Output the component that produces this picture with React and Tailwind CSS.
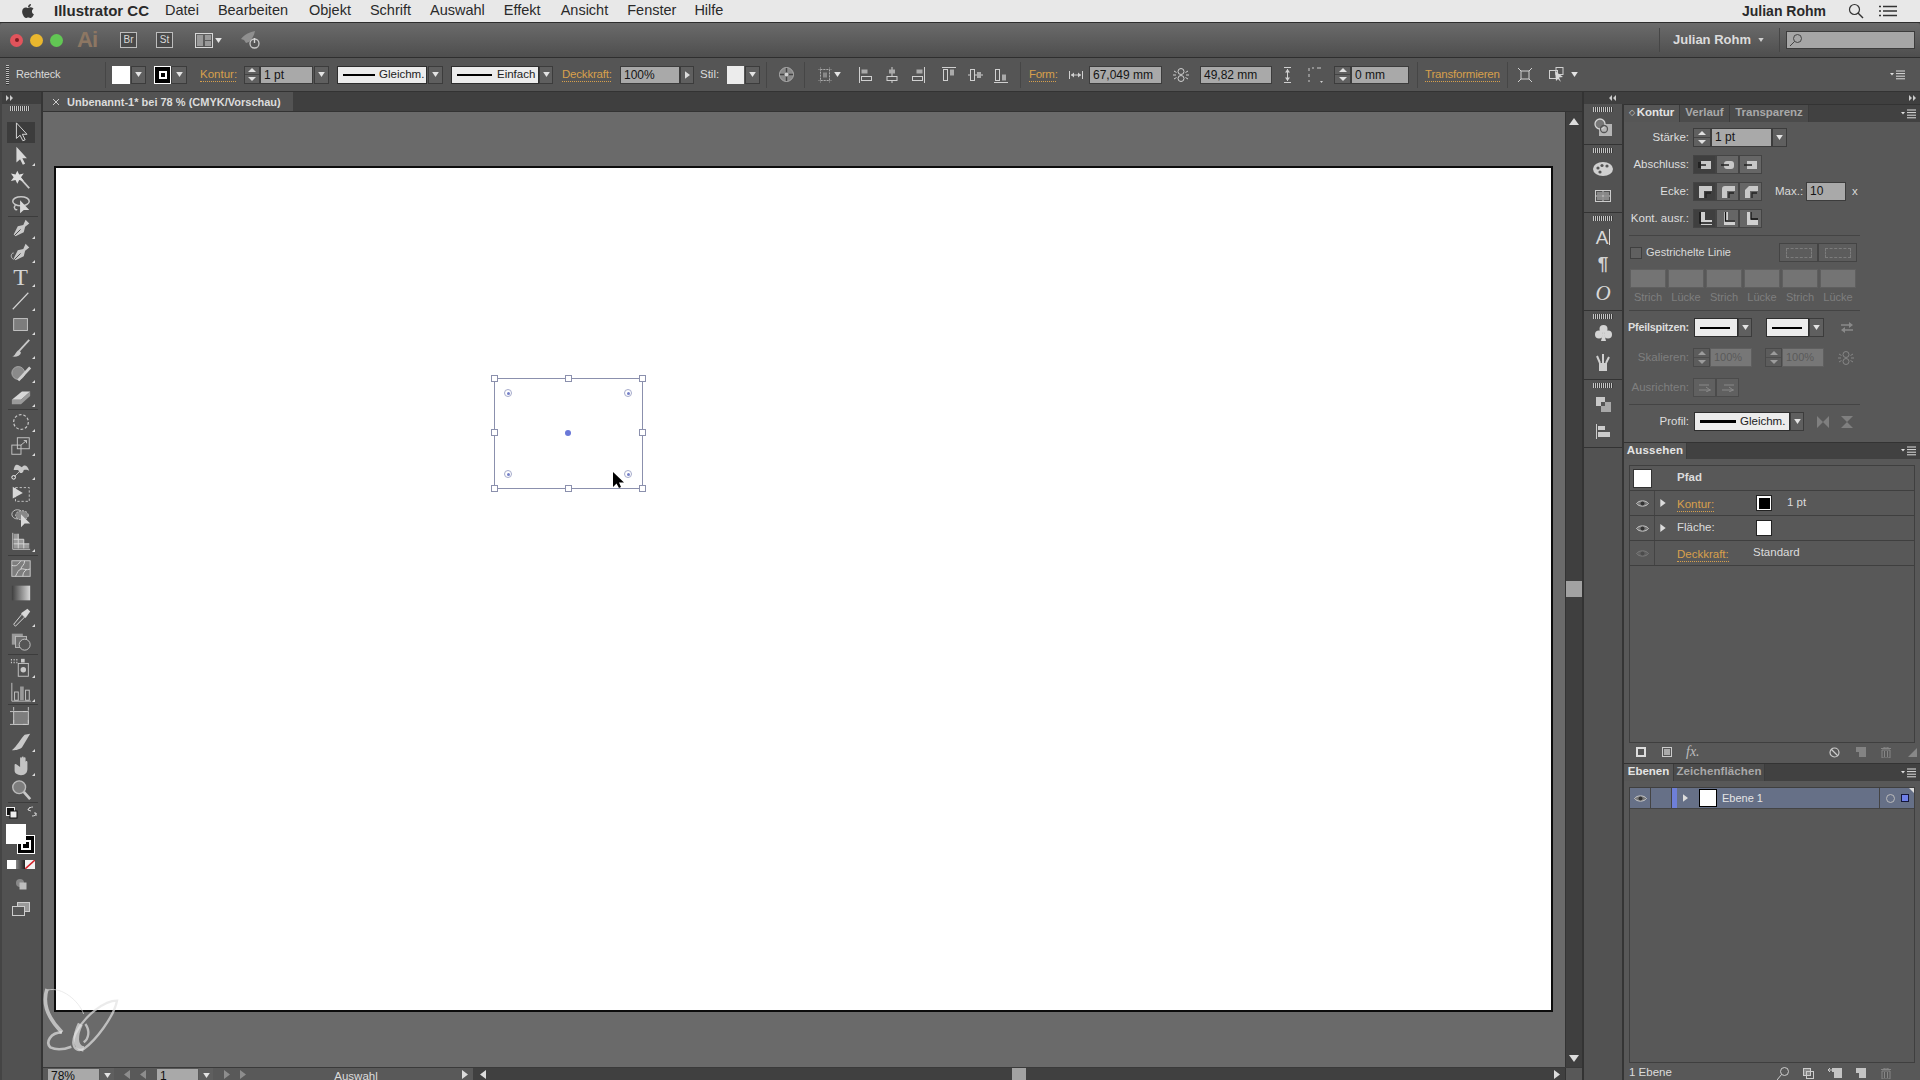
import React from "react";
import { FaApple } from "react-icons/fa";

const Svg = ({ w = 16, h = 16, vb, className = "", children }) => (
  <svg width={w} height={h} viewBox={vb || `0 0 ${w} ${h}`} className={"block shrink-0 " + className} fill="none">{children}</svg>
);
const TriD = ({ c = "#e4e4e4", s = 7 }) => <Svg w={s} h={s - 2} vb="0 0 8 6"><path d="M0 0H8L4 6Z" fill={c} /></Svg>;
const TriR = ({ c = "#dcdcdc", w = 6, h = 9 }) => <Svg w={w} h={h} vb="0 0 6 9"><path d="M0 0L6 4.5L0 9Z" fill={c} /></Svg>;
const TriL = ({ c = "#dcdcdc", w = 6, h = 9 }) => <Svg w={w} h={h} vb="0 0 6 9"><path d="M6 0L0 4.5L6 9Z" fill={c} /></Svg>;
const Btn = ({ className = "" }) => (
  <div className={"h-[18px] shrink-0 bg-[#5f5f5f] border border-[#3c3c3c] flex items-center justify-center " + className}><TriD /></div>
);
const Stepper = ({ className = "", dim }) => (
  <div className={"shrink-0 h-[18px] bg-[#606060] border border-[#3c3c3c] flex flex-col items-center justify-center gap-[2px] " + (dim ? "opacity-50 " : "") + className}>
    <Svg w={8} h={4} vb="0 0 8 4"><path d="M0 4L4 0L8 4Z" fill="#e0e0e0" /></Svg>
    <div className="w-full h-px bg-[#444]" />
    <Svg w={8} h={4} vb="0 0 8 4"><path d="M0 0H8L4 4Z" fill="#e0e0e0" /></Svg>
  </div>
);
const Field = ({ className = "", children }) => (
  <div className={"h-[18px] shrink-0 bg-[#a9a9a9] border border-[#3c3c3c] text-[#151515] text-[12px] leading-[16px] pl-[3px] whitespace-nowrap overflow-hidden " + className}>{children}</div>
);
const Label = ({ className = "", children }) => <div className={"shrink-0 text-[11.5px] text-[#dadada] whitespace-nowrap " + className}>{children}</div>;
const Orange = ({ className = "", children }) => (
  <div className={"shrink-0 text-[11.5px] leading-[13px] text-[#d8a04c] border-b border-dotted border-[#d8a04c] whitespace-nowrap " + className}>{children}</div>
);
const VSep = ({ className = "" }) => <div className={"w-px h-[26px] bg-[#464646] shrink-0 " + className} />;
const LineBox = ({ className = "", line = "w-[32px] h-[2px]", gap = "ml-[4px]", text }) => (
  <div className={"h-[18px] shrink-0 bg-[#ececec] border border-[#2e2e2e] flex items-center pl-[5px] text-[11.5px] text-[#222] whitespace-nowrap " + className}>
    <div className={"bg-black shrink-0 " + line} />
    {text && <span className={gap}>{text}</span>}
  </div>
);
const Menu3 = () => (
  <Svg w={15} h={10} vb="0 0 15 10">
    <path d="M0 3H4L2 5.5Z" fill="#ddd" />
    <path d="M6 1H15M6 3.6H15M6 6.2H15M6 8.8H15" stroke="#ddd" strokeWidth="1" />
  </Svg>
);
const Grip = ({ className = "" }) => <div className={"h-[5px] w-[20px] bg-[repeating-linear-gradient(90deg,#c4c4c4_0,#c4c4c4_1px,#3a3a3a_1px,#3a3a3a_2px)] " + className} />;

const c1 = "#d0d0d0";

function MenuBar() {
  const items = [
    ["Datei", "ml-[16px]"], ["Bearbeiten", "ml-[19px]"], ["Objekt", "ml-[21px]"], ["Schrift", "ml-[19px]"],
    ["Auswahl", "ml-[19px]"], ["Effekt", "ml-[19px]"], ["Ansicht", "ml-[20px]"], ["Fenster", "ml-[19px]"], ["Hilfe", "ml-[18px]"],
  ];
  return (
    <div className="h-[23px] shrink-0 bg-[#e8e8e8] border-b border-[#2e2e2e] flex items-center text-[14.5px] text-[#2a2a2a]">
      <FaApple className="ml-[20px] text-[#3a3a3a] text-[16px] shrink-0" />
      <div className="ml-[18px] font-bold text-[15px] whitespace-nowrap">Illustrator CC</div>
      {items.map(([t, m]) => <div key={t} className={m + " whitespace-nowrap"}>{t}</div>)}
      <div className="ml-auto font-semibold text-[14px] whitespace-nowrap">Julian Rohm</div>
      <Svg w={16} h={16} className="ml-[22px]"><circle cx="6.5" cy="6.5" r="5" stroke="#333" strokeWidth="1.2" /><path d="M10 10L15 15" stroke="#333" strokeWidth="1.4" /></Svg>
      <Svg w={18} h={12} className="ml-[15px] mr-[23px]"><path d="M0 1.5H2M0 6H2M0 10.5H2M4 1.5H18M4 6H18M4 10.5H18" stroke="#333" strokeWidth="1.5" /></Svg>
    </div>
  );
}

function TitleBar() {
  return (
    <div className="h-[35px] shrink-0 bg-gradient-to-b from-[#6b6b6b] to-[#4e4e4e] border-b border-[#2f2f2f] flex items-center rounded-t-[3px]">
      <div className="ml-[10px] w-[13px] h-[13px] rounded-full bg-[#e2545c] flex items-center justify-center shrink-0"><div className="w-[4px] h-[4px] rounded-full bg-[#7d1d22]" /></div>
      <div className="ml-[7px] w-[13px] h-[13px] rounded-full bg-[#eab72e] shrink-0" />
      <div className="ml-[7px] w-[13px] h-[13px] rounded-full bg-[#62c754] shrink-0" />
      <div className="ml-[14px] w-[19px] text-[22px] font-bold text-[#8d7763] leading-none tracking-[-1px]">Ai</div>
      <div className="ml-[24px] w-[17px] h-[16px] border border-[#bdbdbd] bg-[#4a4a4a] text-[10px] leading-[14px] text-center text-[#d8d8d8] shrink-0">Br</div>
      <div className="ml-[19px] w-[17px] h-[16px] border border-[#bdbdbd] bg-[#4a4a4a] text-[10px] leading-[14px] text-center text-[#d8d8d8] shrink-0">St</div>
      <Svg w={18} h={15} className="ml-[22px]"><rect x=".5" y=".5" width="17" height="14" stroke="#d8d8d8" /><rect x="2" y="2" width="6" height="11" fill="#999" /><rect x="10" y="2" width="6" height="5" fill="#999" /><rect x="10" y="8" width="6" height="5" fill="#999" /></Svg>
      <div className="ml-[2px]"><TriD /></div>
      <Svg w={21} h={19} className="ml-[18px]">
        <path d="M1 8C5 3 10 1 15 0C14 5 12 8 9 11L6 12L4 9Z" fill="#8f8f8f" />
        <circle cx="14.5" cy="12.5" r="4.5" stroke="#c8c8c8" strokeWidth="1.3" fill="#555" />
        <path d="M14.5 7V12" stroke="#d8d8d8" strokeWidth="1.4" />
      </Svg>
      <VSep className="ml-auto !h-[24px]" />
      <div className="ml-[13px] w-[75px] font-bold text-[13px] text-[#dcdcdc] whitespace-nowrap">Julian Rohm</div>
      <div className="ml-[10px]"><TriD c="#cfcfcf" s={6} /></div>
      <VSep className="ml-[15px] !h-[24px]" />
      <div className="ml-[6px] mr-[5px] w-[129px] h-[18px] bg-[#a6a6a6] border border-[#3c3c3c] flex items-center pl-[2px] shrink-0">
        <Svg w={14} h={14}><circle cx="8.5" cy="5.5" r="4" stroke="#444" /><path d="M5.5 8.5L1 13" stroke="#444" /></Svg>
      </div>
    </div>
  );
}

function ControlBar() {
  return (
    <div className="h-[34px] shrink-0 bg-[#555555] border-b border-[#333] flex items-center">
      <div className="ml-[6px] w-[3px] h-[20px] bg-[repeating-linear-gradient(180deg,#bbb_0,#bbb_1px,#333_1px,#333_2px)] shrink-0" />
      <Label className="ml-[7px] w-[43px] text-[11px] tracking-[-.2px]">Rechteck</Label>
      <VSep className="ml-[46px]" />
      <div className="ml-[6px] w-[18px] h-[18px] bg-white shrink-0" />
      <Btn className="ml-px w-[15px]" />
      <div className="ml-[8px] w-[17px] h-[18px] bg-black border border-white flex items-center justify-center shrink-0"><div className="w-[8px] h-[8px] border-2 border-white" /></div>
      <Btn className="w-[16px]" />
      <Orange className="ml-[13px] w-[36px]">Kontur:</Orange>
      <Stepper className="ml-[8px] w-[16px]" />
      <Field className="w-[53px]">1 pt</Field>
      <Btn className="ml-px w-[15px]" />
      <LineBox className="ml-[8px] w-[90px]" line="w-[32px] h-[2px]" text="Gleichm." />
      <Btn className="ml-px w-[15px]" />
      <LineBox className="ml-[8px] w-[88px]" line="w-[35px] h-[2px]" gap="ml-[5px]" text="Einfach" />
      <Btn className="w-[14px]" />
      <Orange className="ml-[9px] w-[49px] tracking-[-.2px]">Deckkraft:</Orange>
      <Field className="ml-[9px] w-[60px]">100%</Field>
      <div className="w-[14px] h-[18px] bg-[#5f5f5f] border border-[#3c3c3c] flex items-center justify-center shrink-0"><TriR w={5} h={8} /></div>
      <Label className="ml-[6px] w-[18px]">Stil:</Label>
      <div className="ml-[9px] w-[17px] h-[18px] bg-[#ececec] shrink-0" />
      <Btn className="ml-px w-[15px]" />
      <VSep className="ml-[6px]" />
      <Svg w={15} h={15} className="ml-[12px]">
        <circle cx="7.5" cy="7.5" r="7" fill="#8a8a8a" stroke="#aaa" />
        <path d="M7.5 1V6M14 7.5H9M7.5 14V9M1 7.5H6" stroke="#444" strokeWidth="1.4" />
        <circle cx="7.5" cy="7.5" r="2" fill="#d0d0d0" />
      </Svg>
      <VSep className="ml-[10px]" />
      <Svg w={14} h={16} className="ml-[13px]"><rect x="2.5" y="2.5" width="9" height="11" stroke="#bbb" strokeDasharray="1.5 1.5" /><rect x="5" y="5.5" width="4" height="5" fill="#888" /><path d="M0 2.5H14M0 13.5H14M2.5 0V16M11.5 0V16" stroke="#999" strokeWidth=".5" /></Svg>
      <div className="ml-[2px]"><TriD /></div>
      <Svg w={14} h={16} className="ml-[18px]"><path d="M.5 0V16" stroke={c1} /><rect x="2.5" y="2.5" width="6" height="4" fill="#aaa" /><rect x="2.5" y="9.5" width="10" height="4" stroke={c1} /></Svg>
      <Svg w={12} h={16} className="ml-[13px]"><path d="M6 0V16" stroke={c1} /><rect x="3" y="2.5" width="6" height="4" fill="#aaa" /><rect x="1" y="9.5" width="10" height="4" fill="#555" stroke={c1} /></Svg>
      <Svg w={14} h={16} className="ml-[13px]"><path d="M13.5 0V16" stroke={c1} /><rect x="5.5" y="2.5" width="6" height="4" fill="#aaa" /><rect x="1.5" y="9.5" width="10" height="4" stroke={c1} /></Svg>
      <Svg w={14} h={16} className="ml-[17px]"><path d="M0 .5H14" stroke={c1} /><rect x="1.5" y="2.5" width="4" height="11" stroke={c1} /><rect x="8" y="2.5" width="4" height="6" fill="#aaa" /></Svg>
      <Svg w={15} h={16} className="ml-[12px]"><path d="M0 8H15" stroke={c1} /><rect x="2.5" y="2.5" width="4" height="11" fill="#555" stroke={c1} /><rect x="9" y="5" width="4" height="6" fill="#aaa" /></Svg>
      <Svg w={14} h={16} className="ml-[11px]"><path d="M0 15.5H14" stroke={c1} /><rect x="1.5" y="2.5" width="4" height="11" stroke={c1} /><rect x="8" y="7.5" width="4" height="6" fill="#aaa" /></Svg>
      <VSep className="ml-[12px]" />
      <Orange className="ml-[8px] w-[27px] tracking-[-.3px]">Form:</Orange>
      <Svg w={14} h={8} className="ml-[13px]"><path d="M.5 0V8M13.5 0V8M2 4H12" stroke={c1} /><path d="M2 4L5 1.5V6.5ZM12 4L9 1.5V6.5Z" fill={c1} /></Svg>
      <Field className="ml-[6px] w-[73px]">67,049 mm</Field>
      <Svg w={16} h={16} className="ml-[11px]"><rect x="5" y="1.5" width="6" height="6" rx="3" stroke={c1} /><rect x="5" y="8.5" width="6" height="6" rx="3" stroke={c1} /><path d="M1 4L3.5 5.5M15 4L12.5 5.5M1 12L3.5 10.5M15 12L12.5 10.5M0 8H3M13 8H16" stroke={c1} /></Svg>
      <Field className="ml-[11px] w-[72px]">49,82 mm</Field>
      <Svg w={7} h={16} className="ml-[12px]"><path d="M0 .5H7M0 15.5H7M3.5 2V14" stroke={c1} /><path d="M3.5 2L1 5.5H6ZM3.5 14L1 10.5H6Z" fill={c1} /></Svg>
      <Svg w={16} h={16} className="ml-[17px]"><path d="M1 1V4M1 7V10M1 13V15M4 1H6M9 1H13" stroke="#ccc" /><path d="M12 14H15L13.5 16Z" fill="#ccc" /></Svg>
      <Stepper className="ml-[10px] w-[17px]" />
      <Field className="w-[58px]">0 mm</Field>
      <VSep className="ml-[8px]" />
      <Orange className="ml-[7px] w-[75px] tracking-[-.2px]">Transformieren</Orange>
      <VSep className="ml-[7px]" />
      <Svg w={14} h={14} className="ml-[10px]"><rect x="3" y="3" width="8" height="8" stroke={c1} /><path d="M0 0L3 3M14 0L11 3M0 14L3 11M14 14L11 11" stroke={c1} /></Svg>
      <Svg w={15} h={15} className="ml-[17px]"><rect x=".5" y="3.5" width="8" height="8" stroke={c1} /><rect x="7" y=".5" width="7" height="7" stroke={c1} /><path d="M6 4L14 10L10 10.5L12 15L9 12L7 14Z" fill="#d8d8d8" /></Svg>
      <div className="ml-[7px]"><TriD /></div>
      <div className="ml-auto mr-[15px]"><Menu3 /></div>
    </div>
  );
}

const Tool = ({ more, active, children }) => (
  <div className="relative h-[24px] flex items-center justify-center w-[41px]">
    {active && <div className="absolute left-[7px] top-[2px] w-[28px] h-[21px] bg-[#3c3c3c]" />}
    <div className="relative">{children}</div>
    {more && <Svg w={3} h={3} className="absolute left-[32px] bottom-[2px]"><path d="M3 0V3H0Z" fill="#ddd" /></Svg>}
  </div>
);
const Sep = ({ className = "" }) => <div className={"ml-[6px] w-[30px] h-px bg-[#3c3c3c] shrink-0 " + className} />;
const g = "#c8c8c8";
const pen = "M17 2L21 6L16.5 9.5L15 15.5L6 20L4 18L8.5 9L14.5 7.5Z";

function ToolPanel() {
  const I = ({ children }) => <Svg w={22} h={22} vb="0 0 24 24">{children}</Svg>;
  return (
    <div className="w-[43px] shrink-0 bg-[#515151] border-l-2 border-l-[#444] border-r-2 border-r-[#353535] flex flex-col relative">
      <div className="absolute left-0 top-0 w-[39px] h-[12px] bg-[#3f3f3f] flex items-center pl-[4px]">
        <Svg w={7} h={6}><path d="M0 0L3 3L0 6ZM4 0L7 3L4 6Z" fill="#ccc" /></Svg>
      </div>
      <Grip className="ml-[8px] mt-[14px] shrink-0" />
      <div className="h-[9px] shrink-0" />
      <div className="-ml-[2px]">
        <Tool active><I><path d="M7 2V19L11 15.5L14 21.5L16.5 20.5L13.5 14.5H18.5Z" fill="#3c3c3c" stroke="#e0e0e0" /></I></Tool>
        <Tool more><I><path d="M7 2V19L11 15.5L14 21.5L16.5 20.5L13.5 14.5H18.5Z" fill="#d8d8d8" /></I></Tool>
        <Tool><I><path d="M11 10L21 21" stroke="#ccc" strokeWidth="2" /><path d="M8 2L10 6L15 5L12 9L15 13L10 12L8 16L6 12L1 13L4 9L1 5L6 6Z" fill="#e0e0e0" /></I></Tool>
        <Tool><I><ellipse cx="12" cy="9" rx="9" ry="5" stroke={g} strokeWidth="1.6" /><path d="M6 13C3 16 6 19 8 18" stroke={g} strokeWidth="1.5" /><path d="M11 8V22L15 18.5H21Z" fill="#d8d8d8" /></I></Tool>
      </div>
      <Sep />
      <div className="-ml-[2px]">
        <Tool more><I><path d={pen} fill={g} /><path d="M5 19L11.5 12.5" stroke="#444" /></I></Tool>
        <Tool more><I><path d={pen} fill={g} /><path d="M5 19L11.5 12.5" stroke="#444" /><path d="M4 19C0 17 1 12 4 12" stroke={g} /></I></Tool>
        <Tool more><div className="font-['Liberation_Serif',serif] text-[24px] leading-[22px] text-[#d4d4d4] w-[22px] text-center">T</div></Tool>
        <Tool more><I><path d="M3 21L20 3" stroke="#d4d4d4" strokeWidth="1.2" /></I></Tool>
        <Tool more><I><rect x="4" y="5" width="15" height="13" fill="#7d7d7d" stroke="#c8c8c8" /></I></Tool>
        <Tool more><I><path d="M21 2L10 14" stroke={g} strokeWidth="2" /><path d="M2 20C6 20 6 14 10 13L12 16C11 20 6 21 2 20Z" fill={g} /></I></Tool>
        <Tool more><I><circle cx="9" cy="12" r="7" fill="#8a8a8a" stroke="#aaa" /><path d="M9 20L22 6" stroke="#d0d0d0" strokeWidth="3" /></I></Tool>
        <Tool more><I><path d="M2 15L13 6H22L12 15Z" fill="#d8d8d8" /><path d="M2 15H12V20H2ZM12 15L22 6V11L12 20Z" fill="#9a9a9a" /></I></Tool>
      </div>
      <Sep />
      <div className="-ml-[2px]">
        <Tool more><I><circle cx="12" cy="12" r="8" stroke={g} strokeDasharray="3 2" strokeWidth="1.3" /></I></Tool>
        <Tool more><I><rect x="2" y="11" width="10" height="10" stroke={g} /><rect x="8" y="3" width="13" height="12" stroke={g} /><path d="M12 11L18 6M15 6H18V9" stroke={g} /></I></Tool>
        <Tool more><I><path d="M4 12C6 2 10 8 13 9C15 6 19 6 21 13C18 11 17 12 15 12C14 17 10 16 9 12C7 12 6 12 4 12Z" fill={g} /><circle cx="4" cy="20" r="2" stroke="#fff" /><path d="M5 19L10 14" stroke={g} /></I></Tool>
        <Tool><I><rect x="6" y="5" width="15" height="15" stroke={g} strokeDasharray="2.5 2" /><path d="M3 4L14 11L3 17Z" fill="#d8d8d8" /></I></Tool>
        <Tool><I><ellipse cx="8" cy="8" rx="6" ry="5" stroke={g} /><ellipse cx="13" cy="9" rx="7" ry="5" fill="#888" stroke={g} strokeDasharray="2 1.5" /><path d="M12 8V22L16 18H22Z" fill="#d8d8d8" /></I></Tool>
        <Tool more><I><path d="M3 2V20H22" stroke={g} /><path d="M4 3H9V9H15V14H21V19H4Z" fill="#9a9a9a" /><path d="M9 3V19M15 9V19M4 9H15M4 14H21" stroke="#d8d8d8" /></I></Tool>
      </div>
      <Sep className="my-px" />
      <div className="-ml-[2px]">
        <Tool><I><rect x="2" y="3" width="20" height="17" fill="#7d7d7d" stroke="#ccc" /><path d="M2 8C8 10 9 6 12 3M12 12C14 11 18 14 22 12M6 20C8 16 9 13 12 12C12 9 16 8 16 3M14 20C14 16 16 14 18 13" stroke="#d8d8d8" /></I></Tool>
        <Tool><Svg w={22} h={22} vb="0 0 24 24"><defs><linearGradient id="gr" x1="0" x2="1"><stop offset="0" stopColor="#3e3e3e" /><stop offset="1" stopColor="#d8d8d8" /></linearGradient></defs><rect x="2" y="4" width="20" height="16" fill="url(#gr)" /></Svg></Tool>
        <Tool more><I><path d="M4 20L13 9L16 12L6 22Z" fill="#555" stroke="#e0e0e0" /><path d="M12 8L19 3L22 6L17 13Z" fill="#d8d8d8" /></I></Tool>
        <Tool><I><rect x="2" y="4" width="12" height="12" fill="#9a9a9a" /><rect x="6" y="7" width="12" height="12" fill="#6d6d6d" stroke="#bbb" /><circle cx="16" cy="16" r="6" fill="#555" stroke={g} /></I></Tool>
      </div>
      <Sep className="my-px" />
      <div className="-ml-[2px]">
        <Tool more><I><path d="M1 3H2M4 3H5M7 3H8M1 6H2M4 6H5M7 6H8" stroke="#ddd" strokeWidth="1.5" /><rect x="12" y="2" width="4" height="4" fill={g} /><rect x="9" y="7" width="11" height="14" stroke={g} /><circle cx="14.5" cy="14" r="3" fill={g} /></I></Tool>
        <Tool more><I><path d="M2 2V22H23" stroke={g} /><rect x="5" y="12" width="4" height="9" stroke={g} /><rect x="11" y="6" width="4" height="15" fill="#999" /><rect x="17" y="10" width="4" height="11" stroke={g} /></I></Tool>
      </div>
      <Sep className="mb-px" />
      <div className="-ml-[2px]">
        <Tool><I><rect x="4" y="5" width="16" height="14" fill="#7d7d7d" stroke="#ccc" /><path d="M0 5H24M0 19H24M4 0V24M20 0V24" stroke="#ccc" strokeDasharray="4 10" /></I></Tool>
        <Tool more><I><path d="M2 21C8 16 12 8 16 4L22 3L13 18C9 21 5 21 2 21Z" fill={g} /></I></Tool>
        <Tool more><I><path d="M5 11V17C5 20 8 22 12 22C17 22 19 19 19 15V8C19 6 17 6 17 8V12V4C17 2 15 2 15 4V11V3C15 1 13 1 13 3V11V4C13 2 11 2 11 4V13L8 11C6 9 5 10 5 11Z" fill="#c4c4c4" /></I></Tool>
        <Tool><I><circle cx="10" cy="9" r="7" fill="#7d7d7d" stroke="#bbb" strokeWidth="1.5" /><path d="M15 14L22 22" stroke={g} strokeWidth="3" /></I></Tool>
      </div>
      <Sep />
      <div className="-ml-[2px] relative h-[114px]">
        <div className="absolute left-[6px] top-[4px]">
          <Svg w={12} h={12}><rect x=".5" y=".5" width="8" height="8" fill="#111" stroke="#eee" /><rect x="4" y="4" width="7" height="7" fill="#eee" stroke="#111" /></Svg>
        </div>
        <div className="absolute left-[27px] top-[3px]">
          <Svg w={10} h={11}><path d="M1 4C1 2 4 1 6 1M3 1L1 4L4 5M9 7C9 9 8 10 5 10M7 7L9 7L9 10" stroke="#ccc" /></Svg>
        </div>
        <div className="absolute left-[17px] top-[32px] w-[18px] h-[19px] bg-black border border-white flex items-center justify-center"><div className="w-[10px] h-[10px] border-2 border-white" /></div>
        <div className="absolute left-[6px] top-[21px] w-[20px] h-[20px] bg-white" />
        <div className="absolute left-[7px] top-[57px] flex h-[9px] w-[28px]">
          <div className="w-[9px] bg-white" />
          <div className="w-[9px] bg-gradient-to-r from-[#888] to-[#222]" />
          <Svg w={10} h={9}><rect width="10" height="9" fill="#f3f3f3" /><path d="M0 9L10 0" stroke="#d3222a" strokeWidth="1.6" /></Svg>
        </div>
        <div className="absolute left-[15px] top-[75px]">
          <Svg w={12} h={12}><circle cx="5" cy="5" r="4" fill="#888" /><rect x="4.5" y="4.5" width="7" height="7" fill="#bdbdbd" /></Svg>
        </div>
        <div className="absolute left-[12px] top-[99px]">
          <Svg w={18} h={14}><rect x="5.5" y=".5" width="12" height="9" fill="#999" stroke="#ccc" /><rect x=".5" y="4.5" width="12" height="9" fill="#555" stroke="#ccc" /></Svg>
        </div>
      </div>
    </div>
  );
}

function Selection() {
  const H = ({ className }) => <div className={"absolute w-[7px] h-[7px] bg-white border border-[#8b90ad] " + className} />;
  const W = ({ className }) => (
    <div className={"absolute w-[8px] h-[8px] rounded-full border border-[#a5aacb] flex items-center justify-center " + className}><div className="w-[3px] h-[3px] rounded-full bg-[#7580c8]" /></div>
  );
  return (
    <div className="absolute left-[438px] top-[210px] w-[149px] h-[111px] border border-[#8b90ad]">
      <H className="-left-[4px] -top-[4px]" /><H className="left-[70px] -top-[4px]" /><H className="-right-[4px] -top-[4px]" />
      <H className="-left-[4px] top-[50px]" /><H className="-right-[4px] top-[50px]" />
      <H className="-left-[4px] -bottom-[4px]" /><H className="left-[70px] -bottom-[4px]" /><H className="-right-[4px] -bottom-[4px]" />
      <W className="left-[9px] top-[10px]" /><W className="right-[10px] top-[10px]" /><W className="left-[9px] bottom-[10px]" /><W className="right-[10px] bottom-[10px]" />
      <div className="absolute left-[70px] top-[51px] w-[6px] h-[6px] rounded-full bg-[#6a78d8]" />
      <Svg w={12} h={16} vb="0 0 12 16" className="absolute left-[118px] top-[93px]"><path d="M0 0V15L3.5 11.5L6 16L8 15L6 10.5H11Z" fill="#000" /></Svg>
    </div>
  );
}

function Canvas() {
  return (
    <div className="flex-1 min-w-0 flex flex-col">
      <div className="h-[20px] shrink-0 bg-[#3f3f3f] border-b border-[#333] flex">
        <div className="w-[250px] h-full bg-[#535353] flex items-center pl-[10px] pt-px text-[11px] font-bold text-[#dcdcdc] whitespace-nowrap">
          <Svg w={6} h={6} className="mr-[8px]"><path d="M0 0L6 6M6 0L0 6" stroke="#ccc" /></Svg>
          Unbenannt-1* bei 78 % (CMYK/Vorschau)
        </div>
      </div>
      <div className="flex-1 min-h-0 flex">
        <div className="flex-1 min-w-0 bg-[#6a6a6a] relative pl-[11px] pt-[54px]">
          <div className="w-[1499px] h-[846px] bg-white border-2 border-[#0c0c0c] relative"><Selection /></div>
          <Svg w={80} h={70} vb="0 0 240 210" className="absolute left-[-1px] top-[872px]">
            <g stroke="#e2e2e2" strokeOpacity=".7" fill="none">
              <path d="M18 18C60 8 110 50 125 90" strokeWidth="3" />
              <path d="M15 15C0 60 20 105 60 145" strokeWidth="11" />
              <path d="M60 145C25 145 10 175 25 190C45 200 70 195 88 188" strokeWidth="8" />
              <path d="M225 50C190 50 130 90 100 150C85 185 100 205 125 195C160 170 215 100 225 50Z" strokeWidth="7" />
              <path d="M115 120C100 150 95 190 125 195" strokeWidth="16" />
              <path d="M130 120C145 140 140 165 125 175" strokeWidth="7" />
            </g>
          </Svg>
        </div>
        <div className="w-[17px] shrink-0 bg-[#3f3f3f] border-l border-[#333] relative flex flex-col items-center">
          <div className="mt-[6px]"><Svg w={10} h={7}><path d="M0 7L5 0L10 7Z" fill="#ddd" /></Svg></div>
          <div className="mt-[456px] w-full h-[16px] bg-[#a2a2a2]" />
          <div className="mt-[458px]"><Svg w={10} h={7}><path d="M0 0H10L5 7Z" fill="#ddd" /></Svg></div>
        </div>
      </div>
      <div className="h-[13px] shrink-0 flex border-t border-[#3a3a3a] items-start overflow-hidden bg-[#595959]">
        <div className="ml-[5px] mt-px w-[51px] h-[16px] bg-[#a9a9a9] text-[12px] leading-[15px] text-[#111] pl-[3px] shrink-0">78%</div>
        <div className="ml-px w-[14px] h-[16px] bg-[#5f5f5f] flex justify-center pt-[5px] shrink-0"><TriD /></div>
        <div className="ml-[10px] flex items-center gap-[10px] opacity-40 pt-[2px]"><TriL /><TriL /></div>
        <div className="ml-[11px] mt-px w-[41px] h-[16px] bg-[#a9a9a9] text-[12px] leading-[15px] text-[#111] pl-[3px] shrink-0">1</div>
        <div className="ml-px w-[14px] h-[16px] bg-[#5f5f5f] flex justify-center pt-[5px] shrink-0"><TriD /></div>
        <div className="ml-[11px] flex items-center gap-[10px] opacity-40 pt-[2px]"><TriR /><TriR /></div>
        <div className="ml-[10px] mt-px w-[200px] text-center text-[11.5px] leading-[14px] text-[#dcdcdc] shrink-0">Auswahl</div>
        <div className="ml-[6px] pt-[2px] shrink-0"><TriR /></div>
        <div className="ml-[5px] flex-1 min-w-0 h-full bg-[#404040] flex items-start pl-[7px] pt-[2px] relative">
          <TriL />
          <div className="absolute left-[539px] top-0 w-[14px] h-[13px] bg-[#a2a2a2]" />
          <div className="ml-auto mr-[5px]"><TriR /></div>
        </div>
        <div className="w-[17px] h-full bg-[#585858] border-l border-[#333] shrink-0" />
      </div>
    </div>
  );
}

function Dock() {
  const Box = ({ className = "", children }) => (
    <div className={"border-b border-[#333] flex flex-col items-center shrink-0 " + className}><Grip className="mt-[3px] shrink-0" />{children}</div>
  );
  return (
    <div className="w-[38px] shrink-0 bg-[#525252] flex flex-col">
      <Box className="h-[41px]">
        <Svg w={18} h={18} className="mt-[6px]"><rect x="5" y="6" width="13" height="12" fill="#b5b5b5" /><circle cx="6" cy="6" r="5" fill="#777" stroke="#d4d4d4" strokeWidth="1.3" /><circle cx="10" cy="11" r="3.5" stroke="#555" strokeWidth="1.3" /></Svg>
      </Box>
      <Box className="h-[68px]">
        <Svg w={20} h={14} className="mt-[9px]"><ellipse cx="10" cy="7" rx="10" ry="7" fill="#d0d0d0" /><circle cx="5" cy="6" r="1.6" fill="#555" /><circle cx="9" cy="3.5" r="1.6" fill="#555" /><circle cx="14" cy="4" r="1.6" fill="#555" /><circle cx="7" cy="10" r="1.6" fill="#555" /></Svg>
        <Svg w={16} h={12} className="mt-[14px]"><rect x=".5" y=".5" width="15" height="11" stroke="#ccc" /><path d="M8 0V12M0 6H16" stroke="#ccc" /><rect x="2" y="2" width="5" height="3" fill="#888" /><rect x="9" y="2" width="5" height="3" fill="#888" /><rect x="2" y="7" width="5" height="3" fill="#888" /><rect x="9" y="7" width="5" height="3" fill="#888" /></Svg>
      </Box>
      <Box className="h-[98px]">
        <div className="mt-[7px] h-[18px] flex items-center text-[19px] leading-none text-[#d8d8d8]">A<div className="w-px h-[16px] bg-[#d8d8d8] ml-px" /></div>
        <div className="mt-[9px] h-[18px] text-[19px] leading-[18px] font-bold text-[#d0d0d0]">¶</div>
        <div className="mt-[10px] h-[20px] text-[21px] leading-[20px] italic font-['Liberation_Serif',serif] text-[#d8d8d8]">O</div>
      </Box>
      <Box className="h-[69px]">
        <Svg w={17} h={18} className="mt-[5px]"><circle cx="8.5" cy="5" r="4" fill="#d4d4d4" /><circle cx="4" cy="10.5" r="4" fill="#d4d4d4" /><circle cx="13" cy="10.5" r="4" fill="#d4d4d4" /><path d="M8.5 7L11 17H6Z" fill="#d4d4d4" /></Svg>
        <Svg w={16} h={18} className="mt-[11px]"><rect x="4" y="10" width="8" height="8" fill="#cfcfcf" /><path d="M5 10L2 3M8 10V1M11 10L14 4" stroke="#cfcfcf" strokeWidth="2" /></Svg>
      </Box>
      <Box className="h-[68px]">
        <Svg w={15} h={15} className="mt-[9px]"><rect width="9" height="9" fill="#c8c8c8" /><rect x="5" y="5" width="10" height="10" fill="#a8a8a8" /><rect x="5" y="5" width="4" height="4" fill="#555" /></Svg>
        <Svg w={14} h={15} className="mt-[12px]"><path d="M.5 0V15" stroke="#ccc" /><rect x="2" y="2" width="7" height="4" fill="#ccc" /><rect x="2" y="8" width="12" height="5" fill="#ccc" /></Svg>
      </Box>
    </div>
  );
}

const Tab = ({ on, className = "", children }) => (
  <div className={"h-full flex items-center justify-center pb-px text-[11.5px] font-bold whitespace-nowrap border-r border-[#3c3c3c] " + (on ? "bg-[#565656] text-[#e4e4e4] " : "bg-[#4b4b4b] text-[#a8a8a8] ") + className}>{children}</div>
);
const TabBar = ({ h, children }) => (
  <div className={"shrink-0 bg-[#414141] flex border-t border-[#333] " + h}>
    {children}
    <div className="ml-auto mr-[4px] self-center"><Menu3 /></div>
  </div>
);
const PRow = ({ label, labelClass = "text-[#dedede]", mt, children }) => (
  <div className={"h-[19px] flex items-center shrink-0 " + mt}>
    <div className={"w-[65px] text-right text-[11.5px] whitespace-nowrap shrink-0 " + labelClass}>{label}</div>
    <div className="ml-[4px] flex items-center">{children}</div>
  </div>
);
const Seg = ({ on, children }) => (
  <div className={"w-[23px] h-[19px] border border-[#444] flex items-center justify-center shrink-0 " + (on ? "bg-[#3f3f3f]" : "bg-[#666]")}>{children}</div>
);
const HSep = ({ mt }) => <div className={"ml-[5px] w-[231px] h-px bg-[#444] shrink-0 " + mt} />;
const CapI = ({ k }) => (
  <Svg w={13} h={12}>
    <rect x="3" y="2" width="10" height="8" rx={k === 1 ? 3 : 0} fill="#c8c8c8" />
    <path d="M0 6H8" stroke="#222" strokeWidth="1.5" />
    {k === 0 && <rect x="0" y="3" width="3" height="6" fill="#222" />}
  </Svg>
);
const CornerI = ({ k }) => (
  <Svg w={14} h={13}>
    <path d={k === 1 ? "M1 13V4C1 2 2 1 4 1H14V6H6V13Z" : k === 2 ? "M1 13V5L5 1H14V6H6V13Z" : "M1 13V1H14V6H6V13Z"} fill="#c8c8c8" />
    <path d="M8 13V8H13" stroke="#222" strokeWidth="1.3" />
  </Svg>
);
const AlignS = ({ k }) => (
  <Svg w={14} h={13}>
    <path d="M3 0H7V8H14V13H3Z" fill="#d0d0d0" />
    <path d={k === 0 ? "M2 0V11H14" : k === 1 ? "M4.5 0V9H14" : "M7 0V7H14"} stroke="#111" strokeWidth="1.3" />
  </Svg>
);
const Eye = ({ dim }) => (
  <Svg w={13} h={9} className={dim ? "opacity-30" : ""}>
    <path d="M.5 4.5C3 1 10 1 12.5 4.5C10 8 3 8 .5 4.5Z" stroke="#c8c8c8" fill="#777" />
    <circle cx="6.5" cy="4.5" r="2" fill="#333" />
  </Svg>
);

function StrokePanel() {
  const dl = "text-[#7f7f7f]";
  return (
    <div className="h-[335px] shrink-0 flex flex-col">
      <TabBar h="h-[18px]">
        <Tab on className="w-[56px]"><span className="text-[8px] mr-[2px] font-normal text-[#ccc]">◇</span>Kontur</Tab>
        <Tab className="w-[50px]">Verlauf</Tab>
        <Tab className="w-[79px]">Transparenz</Tab>
      </TabBar>
      <PRow label="Stärke:" mt="mt-[6px]">
        <Stepper className="w-[18px] !h-[19px]" /><Field className="w-[61px] !h-[19px]">1 pt</Field><Btn className="w-[15px] !h-[19px]" />
      </PRow>
      <PRow label="Abschluss:" mt="mt-[8px]">
        <Seg on><CapI k={0} /></Seg><Seg><CapI k={1} /></Seg><Seg><CapI k={2} /></Seg>
      </PRow>
      <PRow label="Ecke:" mt="mt-[8px]">
        <Seg on><CornerI k={0} /></Seg><Seg><CornerI k={1} /></Seg><Seg><CornerI k={2} /></Seg>
        <Label className="ml-[13px] w-[26px]">Max.:</Label>
        <Field className="ml-[5px] w-[40px] !h-[19px]">10</Field>
        <Label className="ml-[6px]">x</Label>
      </PRow>
      <PRow label="Kont. ausr.:" mt="mt-[8px]">
        <Seg on><AlignS k={0} /></Seg><Seg><AlignS k={1} /></Seg><Seg><AlignS k={2} /></Seg>
      </PRow>
      <HSep mt="mt-[7px]" />
      <div className="mt-[7px] h-[19px] flex items-center shrink-0 ml-[6px]">
        <div className="w-[12px] h-[12px] bg-[#606060] border border-[#3f3f3f] shrink-0" />
        <Label className="ml-[4px] w-[84px] text-[11px]">Gestrichelte Linie</Label>
        <div className="ml-[49px] w-[39px] h-[19px] border border-[#444] bg-[#5c5c5c] flex items-center justify-center"><div className="w-[26px] h-[10px] border border-dashed border-[#7c7c7c]" /></div>
        <div className="w-[39px] h-[19px] border border-[#444] bg-[#5c5c5c] flex items-center justify-center"><div className="w-[26px] h-[10px] border border-dashed border-[#7c7c7c]" /></div>
      </div>
      <div className="mt-[7px] ml-[6px] flex gap-[2px] shrink-0">
        {[0, 1, 2, 3, 4, 5].map((i) => <div key={i} className="w-[36px] h-[19px] bg-[#747474] border border-[#5f5f5f]" />)}
      </div>
      <div className="mt-[2px] h-[14px] ml-[6px] flex gap-[2px] shrink-0 text-[11px] leading-[14px] text-[#7f7f7f] text-center">
        {["Strich", "Lücke", "Strich", "Lücke", "Strich", "Lücke"].map((t, i) => <div key={i} className="w-[36px]">{t}</div>)}
      </div>
      <HSep mt="mt-[6px]" />
      <PRow label="Pfeilspitzen:" labelClass="text-[#dedede] font-bold !text-[10.8px] tracking-[-.2px]" mt="mt-[7px]">
        <LineBox className="ml-px w-[44px] !h-[19px]" line="w-[30px] h-[2px]" /><Btn className="w-[14px] !h-[19px]" />
        <LineBox className="ml-[14px] w-[43px] !h-[19px]" line="w-[30px] h-[2px]" /><Btn className="w-[15px] !h-[19px]" />
        <Svg w={12} h={11} className="ml-[17px] opacity-50"><path d="M0 3H9M12 8H3" stroke="#bbb" strokeWidth="1.5" /><path d="M8 0L12 3L8 6ZM4 5L0 8L4 11Z" fill="#bbb" /></Svg>
      </PRow>
      <PRow label="Skalieren:" labelClass={dl} mt="mt-[11px]">
        <Stepper dim className="w-[17px] !h-[19px]" /><div className="w-[42px] h-[19px] bg-[#777] border border-[#5f5f5f] text-[11px] text-[#5a5a5a] pl-[3px] leading-[17px]">100%</div>
        <div className="ml-[13px]" /><Stepper dim className="w-[17px] !h-[19px]" /><div className="w-[42px] h-[19px] bg-[#777] border border-[#5f5f5f] text-[11px] text-[#5a5a5a] pl-[3px] leading-[17px]">100%</div>
        <Svg w={16} h={16} className="ml-[14px] opacity-40"><rect x="5" y="1.5" width="6" height="6" rx="3" stroke="#ccc" /><rect x="5" y="8.5" width="6" height="6" rx="3" stroke="#ccc" /><path d="M0 8H3M13 8H16M1 4L3.5 5.5M15 4L12.5 5.5M1 12L3.5 10.5M15 12L12.5 10.5" stroke="#ccc" /></Svg>
      </PRow>
      <PRow label="Ausrichten:" labelClass={dl} mt="mt-[11px]">
        <div className="flex opacity-60">
          <Seg><Svg w={12} h={9}><path d="M0 2H10M0 7H12M7 4L11 7L7 9" stroke="#aaa" /></Svg></Seg>
          <Seg><Svg w={12} h={9}><path d="M2 2H12M0 7H12M7 4L11 7L7 9" stroke="#aaa" /></Svg></Seg>
        </div>
      </PRow>
      <HSep mt="mt-[7px]" />
      <PRow label="Profil:" mt="mt-[7px]">
        <LineBox className="ml-px w-[96px] !h-[19px]" line="w-[36px] h-[3px]" text="Gleichm." /><Btn className="w-[14px] !h-[19px]" />
        <Svg w={12} h={12} className="ml-[13px] opacity-40"><path d="M0 0L6 6L0 12ZM12 0L6 6L12 12Z" fill="#bbb" /></Svg>
        <Svg w={12} h={12} className="ml-[12px] opacity-40"><path d="M0 0L6 6L12 0ZM0 12L6 6L12 12Z" fill="#bbb" /></Svg>
      </PRow>
    </div>
  );
}

const Trash = () => <Svg w={10} h={11} className="opacity-40"><path d="M0 1.5H10M3 1V0H7V1M1 3H9V11H1Z" stroke="#ccc" /><path d="M3.5 4V10M6.5 4V10" stroke="#ccc" /></Svg>;
const NewI = ({ dim }) => <Svg w={10} h={10} className={dim ? "opacity-40" : ""}><path d="M0 0H10V10H3V5H0Z" fill="#c4c4c4" /></Svg>;

function AppRow({ eye, tri, children }) {
  return (
    <div className="h-[25px] shrink-0 flex items-center border-b border-[#3f3f3f]">
      <div className="w-[25px] h-full flex items-center justify-center border-r border-[#444] shrink-0">{eye}</div>
      <div className="w-[22px] pl-[5px] shrink-0">{tri && <TriR w={6} h={8} />}</div>
      {children}
    </div>
  );
}
const AT = ({ children }) => <div className="w-[79px] text-[11.5px] text-[#dcdcdc] whitespace-nowrap">{children}</div>;
const OT = ({ className = "w-[79px]", children }) => (
  <div className={"shrink-0 " + className}><span className="text-[11.5px] leading-[13px] inline-block text-[#d8a04c] border-b border-dotted border-[#d8a04c]">{children}</span></div>
);
const Swatch = ({ c }) => (
  <div className="w-[16px] h-[16px] bg-white flex items-center justify-center border border-[#222]"><div className={"w-[11px] h-[11px] " + c} /></div>
);

function AppearancePanel() {
  return (
    <div className="flex flex-col mt-[3px] shrink-0">
      <TabBar h="h-[17px]"><Tab on className="w-[63px] tracking-[.2px]">Aussehen</Tab></TabBar>
      <div className="mt-[6px] ml-[5px] w-[286px] h-[278px] border border-[#3f3f3f] flex flex-col">
        <div className="h-[25px] shrink-0 flex items-center border-b border-[#3f3f3f]">
          <div className="ml-[3px] w-[19px] h-[19px] bg-white border border-[#333] shrink-0" />
          <div className="ml-[25px] text-[11.5px] font-bold text-[#dcdcdc]">Pfad</div>
        </div>
        <AppRow tri eye={<Eye />}><OT>Kontur:</OT><Swatch c="bg-black" /><div className="ml-[15px] text-[11.5px] text-[#dcdcdc]">1 pt</div></AppRow>
        <AppRow tri eye={<Eye />}><AT>Fläche:</AT><Swatch c="bg-white" /></AppRow>
        <AppRow eye={<Eye dim />}><OT className="w-[76px]">Deckkraft:</OT><div className="text-[11.5px] text-[#dcdcdc]">Standard</div></AppRow>
      </div>
      <div className="h-[20px] shrink-0 flex items-center ml-[12px] pr-[2px] pb-[2px]">
        <Svg w={10} h={10}><rect x="1" y="1" width="8" height="8" stroke="#ddd" strokeWidth="2" fill="#555" /></Svg>
        <Svg w={10} h={10} className="ml-[16px]"><rect x=".5" y=".5" width="9" height="9" stroke="#ccc" /><rect x="2" y="2" width="6" height="6" fill="#aaa" /></Svg>
        <div className="ml-[14px] w-[17px] font-['Liberation_Serif',serif] italic text-[14px] leading-[14px] text-[#bdbdbd] whitespace-nowrap">fx.</div>
        <Svg w={11} h={11} className="ml-[126px]"><circle cx="5.5" cy="5.5" r="4.5" stroke="#ccc" strokeWidth="1.2" /><path d="M2 2L9 9" stroke="#ccc" strokeWidth="1.2" /></Svg>
        <div className="ml-[16px]"><NewI dim /></div>
        <div className="ml-[15px]"><Trash /></div>
        <Svg w={9} h={9} className="ml-[17px]"><path d="M9 0V9H0Z" fill="#888" /></Svg>
      </div>
    </div>
  );
}

function LayersPanel() {
  return (
    <div className="flex flex-col shrink-0">
      <TabBar h="h-[18px]">
        <Tab on className="w-[50px]">Ebenen</Tab>
        <Tab className="w-[91px] tracking-[.1px]">Zeichenflächen</Tab>
      </TabBar>
      <div className="mt-[6px] ml-[5px] w-[286px] h-[276px] border border-[#3f3f3f] flex flex-col">
        <div className="h-[21px] bg-[#667087] border-b border-[#444] flex items-center relative shrink-0">
          <div className="w-[21px] h-full flex items-center justify-center border-r border-[#444] shrink-0"><Eye /></div>
          <div className="w-[21px] h-full border-r border-[#444] shrink-0" />
          <div className="w-[5px] h-full bg-[#6e7fd8] shrink-0" />
          <div className="ml-[6px] shrink-0"><TriR w={5} h={8} /></div>
          <div className="ml-[11px] w-[18px] h-[18px] bg-white border border-black shrink-0" />
          <div className="ml-[5px] text-[11px] text-[#e4e4e4] whitespace-nowrap">Ebene 1</div>
          <div className="ml-auto w-[35px] h-full border-l border-[#444] flex items-center pl-[6px] relative">
            <div className="w-[9px] h-[9px] rounded-full border border-[#bbb]" />
            <div className="ml-[6px] w-[8px] h-[8px] bg-[#6e7fe8] border border-[#14163a]" />
            <Svg w={5} h={5} className="absolute right-0 top-0"><path d="M0 0H5V5Z" fill="#ddd" /></Svg>
          </div>
        </div>
      </div>
      <div className="h-[17px] flex items-center ml-[5px] pt-[3px]">
        <div className="w-[44px] text-[11.5px] text-[#dcdcdc] whitespace-nowrap">1 Ebene</div>
        <Svg w={12} h={13} className="ml-[104px]"><circle cx="7.5" cy="4.5" r="4" stroke="#ccc" /><path d="M4.5 7.5L0 13" stroke="#ccc" /></Svg>
        <Svg w={11} h={11} className="ml-[14px]"><rect x=".5" y=".5" width="7" height="7" fill="#888" stroke="#ccc" /><rect x="3.5" y="3.5" width="7" height="7" stroke="#ccc" /></Svg>
        <Svg w={14} h={10} className="ml-[14px]"><path d="M4 0H14V10H6V4H4Z" fill="#c4c4c4" /><path d="M0 2H4M2 0L0 2L2 4" stroke="#ccc" /></Svg>
        <div className="ml-[14px]"><NewI /></div>
        <div className="ml-[15px]"><Trash /></div>
      </div>
    </div>
  );
}

export default function App() {
  return (
    <div className="w-[1920px] h-[1080px] overflow-hidden flex flex-col bg-[#555] font-['Liberation_Sans',Arial,sans-serif] text-[#ddd]">
      <MenuBar />
      <TitleBar />
      <ControlBar />
      <div className="flex-1 min-h-0 flex">
        <ToolPanel />
        <div className="flex-1 min-w-0 flex">
          <Canvas />
          <div className="w-[2px] shrink-0 bg-[#333]" />
          <div className="w-[336px] shrink-0 flex flex-col">
            <div className="h-[12px] shrink-0 bg-[#3f3f3f] flex items-center justify-between pl-[25px] pr-[4px]">
              <Svg w={7} h={6}><path d="M3 0L0 3L3 6ZM7 0L4 3L7 6Z" fill="#ccc" /></Svg>
              <Svg w={7} h={6}><path d="M0 0L3 3L0 6ZM4 0L7 3L4 6Z" fill="#ccc" /></Svg>
            </div>
            <div className="flex-1 min-h-0 flex">
              <Dock />
              <div className="w-[2px] shrink-0 bg-[#353535]" />
              <div className="flex-1 min-w-0 bg-[#585858] flex flex-col">
                <StrokePanel />
                <AppearancePanel />
                <LayersPanel />
              </div>
            </div>
          </div>
        </div>
      </div>
    </div>
  );
}
